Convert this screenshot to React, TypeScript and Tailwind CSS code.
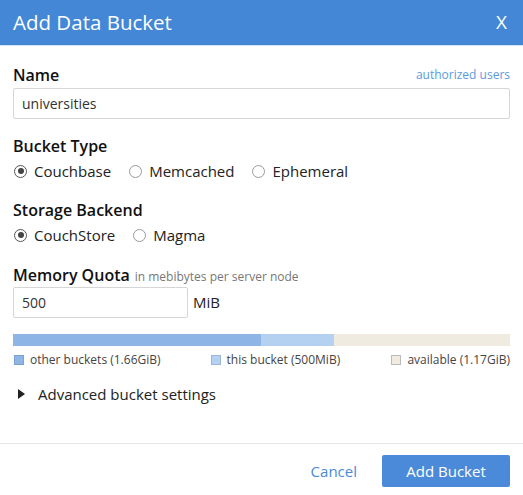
import React from "react";

function Radio({ checked, label }: { checked?: boolean; label: string }) {
  return (
    <label className="flex items-center gap-[7px] mr-[18px]">
      <span
        className={
          checked
            ? "w-[13px] h-[13px] rounded-full border-[1.5px] border-[#555] flex items-center justify-center"
            : "w-[13px] h-[13px] rounded-full border border-[#9a9a9a]"
        }
      >
        {checked && <span className="w-[6px] h-[6px] rounded-full bg-[#444]" />}
      </span>
      <span className="text-[15px] text-[#222]">{label}</span>
    </label>
  );
}

export default function App() {
  return (
    <div
      className="w-[523px] h-[495px] bg-white flex flex-col overflow-hidden"
      style={{ fontFamily: '"Open Sans", sans-serif' }}
    >
      <div className="shrink-0 h-[45px] bg-[#4387d6] flex items-center justify-between pl-[13px] pr-[16px] border-b border-[#d5e4f6] box-content">
        <span className="text-white text-[20.5px] leading-none">Add Data Bucket</span>
        <span className="text-white text-[19px] leading-none">X</span>
      </div>

      <div className="shrink-0 px-[13px] pt-[18px] flex flex-col">
        <div className="flex items-center justify-between h-[22px]">
          <span className="text-[16px] font-semibold text-[#111] leading-[22px]">Name</span>
          <span className="text-[12px] text-[#5b9ae0] leading-[18px]">authorized users</span>
        </div>
        <div className="mt-[2px] h-[31px] border border-[#d6d6d6] rounded-[2px] flex items-center px-[8px] text-[14px] text-[#333]">
          universities
        </div>

        <div className="mt-[16px] text-[16px] font-semibold text-[#111] leading-[22px]">Bucket Type</div>
        <div className="mt-[3px] flex items-center h-[22px] pl-[1px]">
          <Radio checked label="Couchbase" />
          <Radio label="Memcached" />
          <Radio label="Ephemeral" />
        </div>

        <div className="mt-[17px] text-[16px] font-semibold text-[#111] leading-[22px]">Storage Backend</div>
        <div className="mt-[3px] flex items-center h-[22px] pl-[1px]">
          <Radio checked label="CouchStore" />
          <Radio label="Magma" />
        </div>

        <div className="mt-[18px] flex items-baseline gap-[5px] leading-[22px] h-[22px]">
          <span className="text-[16px] font-semibold text-[#111]">Memory Quota</span>
          <span className="text-[12px] text-[#777]">in mebibytes per server node</span>
        </div>
        <div className="mt-[1px] flex items-center gap-[5px]">
          <div className="w-[175px] h-[31px] border border-[#d6d6d6] rounded-[2px] flex items-center px-[8px] text-[14px] text-[#333]">
            500
          </div>
          <span className="text-[15px] text-[#222]">MiB</span>
        </div>

        <div className="mt-[16px] h-[12px] flex">
          <div className="w-[248px] bg-[#8db6e7]" />
          <div className="w-[73px] bg-[#b5d1f1]" />
          <div className="flex-1 bg-[#efebe1]" />
        </div>
        <div className="mt-[5px] h-[18px] flex items-center text-[12px] text-[#444]">
          <span className="flex items-center gap-[6px] pl-[1px]">
            <span className="w-[10px] h-[10px] bg-[#8db6e7] border border-[#7aa2d2]" />
            other buckets (1.66GiB)
          </span>
          <span className="flex items-center gap-[6px] ml-[50px]">
            <span className="w-[10px] h-[10px] bg-[#b5d1f1] border border-[#9ab8dc]" />
            this bucket (500MiB)
          </span>
          <span className="flex-1" />
          <span className="flex items-center gap-[6px]">
            <span className="w-[10px] h-[10px] bg-[#efebe1] border border-[#bbb]" />
            available (1.17GiB)
          </span>
        </div>

        <div className="mt-[14px] flex items-center gap-[13px] pl-[5px] h-[22px]">
          <svg width="7" height="10" viewBox="0 0 7 10">
            <path d="M0 0 L7 5 L0 10 Z" fill="#222" />
          </svg>
          <span className="text-[15px] text-[#222]">Advanced bucket settings</span>
        </div>
      </div>

      <div className="shrink-0 mt-[38px] border-t border-[#e6e6e6] flex items-center justify-end gap-[25px] px-[13px] pt-[11px]">
        <span className="text-[15px] text-[#4a8ad8]">Cancel</span>
        <div className="w-[128px] h-[32px] bg-[#4a8ad8] rounded-[2px] flex items-center justify-center text-white text-[15px]">
          Add Bucket
        </div>
      </div>
    </div>
  );
}
